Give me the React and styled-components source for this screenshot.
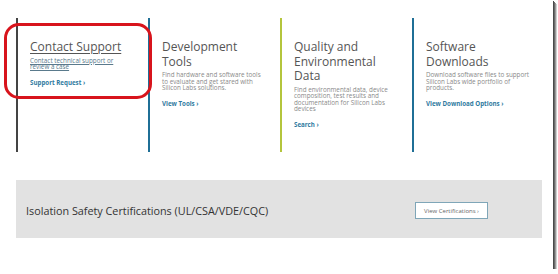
import React from "react";
import styled, { createGlobalStyle } from "styled-components";

const Global = createGlobalStyle`
  html, body { margin: 0; padding: 0; background: #ffffff; }
  body { font-family: "Open Sans", "Liberation Sans", sans-serif; }
  * { box-sizing: border-box; }
`;

const Frame = styled.div`
  position: relative;
  width: 553px;
  height: 269px;
  background: #ffffff;
  box-shadow: 1px 1px 0 #4a4a4a, 2px 2px 0 #6a6a6a, 3px 3px 0 #9a9a9a, 4px 4px 0 #d0d0d0;
  padding: 18px 0 0 16px;
`;

const Columns = styled.div`
  display: grid;
  grid-template-columns: repeat(4, 132px);
  height: 134px;
`;

const Column = styled.div`
  border-left: 2px solid ${(p) => p.$accent};
  padding: 22px 0 0 12px;
  white-space: nowrap;
`;

const Title = styled.div`
  font-size: 12px;
  line-height: 14.5px;
  color: #555555;
  font-weight: 400;
  text-decoration: ${(p) => (p.$underline ? "underline" : "none")};
  text-decoration-thickness: 1px;
  text-underline-offset: 2px;
`;

const Desc = styled.div`
  margin-top: 3px;
  font-size: 6.3px;
  line-height: 6.6px;
  color: ${(p) => (p.$link ? "#5a7a8c" : "#8a8a8a")};
  text-decoration: ${(p) => (p.$link ? "underline" : "none")};
`;

const More = styled.div`
  margin-top: 8.5px;
  font-size: 6.2px;
  line-height: 8px;
  font-weight: 700;
  color: #2f7aa0;
`;

const Banner = styled.div`
  margin-top: 28px;
  width: 526px;
  height: 58px;
  background: #e2e2e2;
  display: flex;
  align-items: center;
  justify-content: space-between;
  padding: 3px 54px 0 10px;
`;

const BannerText = styled.div`
  font-size: 10.8px;
  color: #333333;
`;

const Button = styled.div`
  width: 73px;
  height: 17px;
  background: #ffffff;
  border: 1px solid #7fa6b8;
  display: flex;
  align-items: center;
  justify-content: center;
  font-size: 6px;
  color: #666666;
`;

const Callout = styled.div`
  position: absolute;
  left: 4px;
  top: 23px;
  width: 148px;
  height: 76px;
  border: 3px solid #d8141c;
  border-radius: 15px;
`;

const cols = [
  {
    accent: "#444444",
    title: ["Contact Support"],
    underline: true,
    desc: ["Contact technical support or", "review a case"],
    link: true,
    more: "Support Request",
  },
  {
    accent: "#1f6f96",
    title: ["Development", "Tools"],
    desc: ["Find hardware and software tools", "to evaluate and get stared with", "Silicon Labs solutions."],
    more: "View Tools",
  },
  {
    accent: "#b4c53c",
    title: ["Quality and", "Environmental", "Data"],
    desc: ["Find environmental data, device", "composition, test results and", "documentation for Silicon Labs", "devices"],
    more: "Search",
  },
  {
    accent: "#1f6f96",
    title: ["Software", "Downloads"],
    desc: ["Download software files to support", "Silicon Labs wide portfolio of", "products."],
    more: "View Download Options",
  },
];

export default function App() {
  return (
    <>
      <Global />
      <Frame>
        <Columns>
          {cols.map((c, i) => (
            <Column key={i} $accent={c.accent}>
              <Title $underline={c.underline}>
                {c.title.map((t, j) => (
                  <div key={j}>{t}</div>
                ))}
              </Title>
              <Desc $link={c.link}>
                {c.desc.map((t, j) => (
                  <div key={j}>{t}</div>
                ))}
              </Desc>
              <More>{c.more} ›</More>
            </Column>
          ))}
        </Columns>
        <Banner>
          <BannerText>Isolation Safety Certifications (UL/CSA/VDE/CQC)</BannerText>
          <Button>View Certifications ›</Button>
        </Banner>
        <Callout />
      </Frame>
    </>
  );
}
